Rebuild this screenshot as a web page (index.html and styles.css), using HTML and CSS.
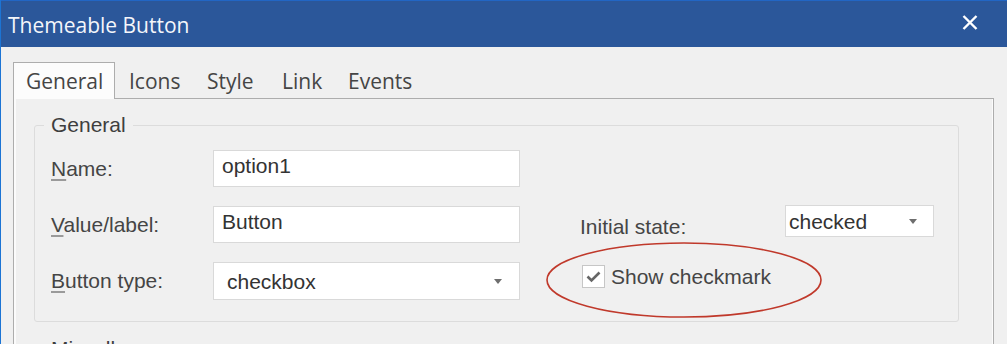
FILE: index.html
```html
<!DOCTYPE html>
<html lang="en">
<head>
<meta charset="utf-8">
<title>Themeable Button</title>
<link rel="stylesheet" href="styles.css">
</head>
<body>
<div class="window">
  <div class="titlebar">
    <span class="title">Themeable Button</span>
    <svg class="close" viewBox="0 0 16 15" width="16" height="15" aria-label="Close">
      <path d="M1.5 1 L14.5 14 M14.5 1 L1.5 14" stroke="#ffffff" stroke-width="2.4" fill="none"/>
    </svg>
  </div>
  <div class="tabs">
    <div class="tab active t-general">General</div>
    <div class="tab t-icons">Icons</div>
    <div class="tab t-style">Style</div>
    <div class="tab t-link">Link</div>
    <div class="tab t-events">Events</div>
  </div>
  <div class="panel">
    <fieldset class="group">
      <legend>General</legend>
      <div class="form">
        <label class="lbl r1"><u>N</u>ame:</label>
        <div class="input r1">option1</div>

        <label class="lbl r2"><u>V</u>alue/label:</label>
        <div class="input r2">Button</div>
        <label class="lbl-right r2">Initial state:</label>
        <div class="select small r2"><span>checked</span><span class="caret"></span></div>

        <label class="lbl r3"><u>B</u>utton type:</label>
        <div class="select big r3"><span>checkbox</span><span class="caret"></span></div>
        <div class="check-cell r3">
          <span class="checkbox">
            <svg viewBox="0 0 21 21" width="21" height="21">
              <path d="M4.5 10.5 L8.5 14.5 L16.5 6.5" stroke="#666666" stroke-width="2.6" fill="none"/>
            </svg>
          </span>
          <span class="check-text">Show checkmark</span>
          <svg class="ellipse" viewBox="0 0 276 76" width="276" height="76">
            <ellipse cx="138" cy="38" rx="137" ry="37" fill="none" stroke="#c0392b" stroke-width="1.6"/>
          </svg>
        </div>
      </div>
    </fieldset>
    <fieldset class="group misc">
      <legend>Miscellaneous</legend>
    </fieldset>
  </div>
</div>
</body>
</html>
```

FILE: styles.css
```css
html, body {
  margin: 0;
  padding: 0;
}

body {
  background: #f0f0f0;
  height: 344px;
  overflow: hidden;
  font-family: "Liberation Sans", Arial, sans-serif;
}

.window {
  border-left: 1px solid #1c74d4;
  height: 344px;
  box-sizing: border-box;
}

.titlebar {
  height: 47px;
  box-sizing: border-box;
  background: #2b579a;
  border-top: 1px solid #2266c4;
  display: flex;
  justify-content: space-between;
  align-items: flex-start;
  padding: 10px 29px 0 7px;
}

.title {
  font-family: "Open Sans", sans-serif;
  font-size: 21px;
  line-height: 28px;
  color: #f4f6fa;
}

.close {
  margin-top: 4px;
  display: block;
}

.tabs {
  display: flex;
  margin: 15px 0 0 12px;
  position: relative;
  z-index: 1;
  height: 36px;
}

.tab {
  box-sizing: border-box;
  height: 36px;
  border: 1px solid transparent;
  border-bottom: 0;
  padding: 4px 0 0 13px;
  font-family: "Open Sans", sans-serif;
  font-size: 21px;
  line-height: 28px;
  color: #454545;
  white-space: nowrap;
}

.tab.active {
  height: 37px;
  background: #fcfcfc;
  border-color: #adadad;
  padding-left: 12px;
}

.t-general { width: 102px; }
.t-icons { width: 78px; }
.t-style { width: 75px; }
.t-link { width: 66px; }
.t-events { width: 90px; }

.panel {
  margin-left: 12px;
  width: 981px;
  height: 400px;
  box-sizing: border-box;
  border: 1px solid #adadad;
  box-shadow: inset 2px 0 0 #fbfbfb, inset -1px 0 0 #fbfbfb;
  padding: 14px 34px 0 20px;
}

.group {
  margin: 0;
  border: 1px solid #dcdcdc;
  border-radius: 3px;
  padding: 13px 0 22px 16px;
  min-width: 0;
}

.group legend {
  font-size: 21px;
  line-height: 24px;
  color: #3e3e3e;
  padding: 0 7px;
  margin-left: -7px;
}

.group.misc {
  margin-top: 15px;
  height: 60px;
}

.form {
  display: grid;
  grid-template-columns: 162px 307px 60px 205px 149px;
  grid-template-rows: 37px 37px 37px;
  row-gap: 19px;
  font-size: 21px;
  line-height: 23px;
}

.r1 { grid-row: 1; }
.r2 { grid-row: 2; }
.r3 { grid-row: 3; }

.lbl {
  grid-column: 1;
  align-self: center;
  color: #454545;
}

.lbl u {
  text-decoration-color: #9a9a9a;
  text-underline-offset: 3px;
}

.lbl-right {
  grid-column: 4;
  align-self: start;
  margin-top: 9px;
  color: #454545;
}

.input {
  grid-column: 2;
  box-sizing: border-box;
  height: 37px;
  background: #ffffff;
  border: 1px solid #d9d9d9;
  padding: 3px 0 0 8px;
  color: #333333;
}

.select {
  box-sizing: border-box;
  background: #ffffff;
  border: 1px solid #d9d9d9;
  display: flex;
  align-items: center;
  justify-content: space-between;
  color: #333333;
}

.select.big {
  grid-column: 2;
  height: 38px;
  padding: 0 17px 0 13px;
}

.select.small {
  grid-column: 5;
  align-self: start;
  height: 32px;
  margin-top: -1px;
  padding: 0 16px 0 3px;
}

.caret {
  width: 0;
  height: 0;
  border-left: 4.5px solid transparent;
  border-right: 4.5px solid transparent;
  border-top: 5px solid #6e6e6e;
}

.check-cell {
  grid-column: 4 / 6;
  align-self: start;
  margin: 3px 0 0 2px;
  display: flex;
  align-items: center;
  gap: 6px;
  position: relative;
  color: #454545;
}

.checkbox {
  width: 23px;
  height: 23px;
  box-sizing: border-box;
  border: 1px solid #c6c6c6;
  background: #ffffff;
  display: flex;
}

.ellipse {
  position: absolute;
  left: -36px;
  top: -23px;
}
```
